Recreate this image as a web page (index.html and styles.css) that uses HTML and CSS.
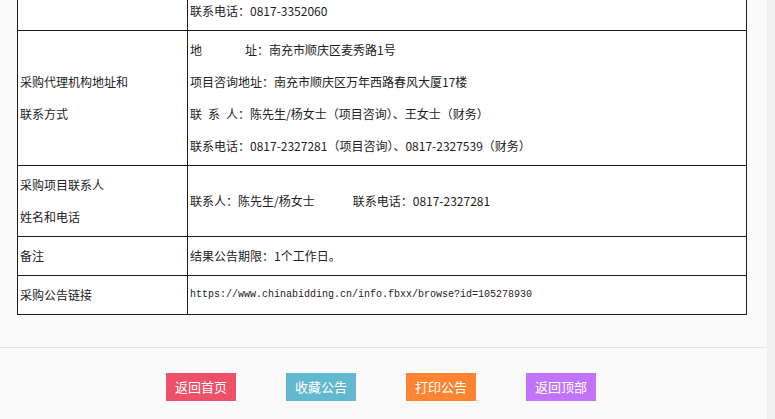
FILE: index.html
```html
<!DOCTYPE html>
<html lang="zh-CN">
<head>
<meta charset="utf-8">
<title>结果公告</title>
<link rel="stylesheet" href="styles.css">
</head>
<body>
<div class="page">
  <main class="main">
    <table class="info">
      <colgroup>
        <col class="col-label">
        <col class="col-value">
      </colgroup>
      <tbody>
        <tr>
          <td></td>
          <td><p>联系电话：0817-3352060</p></td>
        </tr>
        <tr>
          <td><p>采购代理机构地址和</p><p>联系方式</p></td>
          <td>
            <p>地<span class="gap-addr"></span>址：南充市顺庆区麦秀路1号</p>
            <p>项目咨询地址：南充市顺庆区万年西路春风大厦17楼</p>
            <p>联&ensp;系&ensp;人：陈先生/杨女士（项目咨询）、王女士（财务）</p>
            <p>联系电话：0817-2327281（项目咨询）、0817-2327539（财务）</p>
          </td>
        </tr>
        <tr>
          <td><p>采购项目联系人</p><p>姓名和电话</p></td>
          <td><p>联系人：陈先生/杨女士<span class="gap-contact"></span>联系电话：0817-2327281</p></td>
        </tr>
        <tr>
          <td><p>备注</p></td>
          <td><p>结果公告期限：1个工作日。</p></td>
        </tr>
        <tr>
          <td><p>采购公告链接</p></td>
          <td><p class="url">https://www.chinabidding.cn/info.fbxx/browse?id=105278930</p></td>
        </tr>
      </tbody>
    </table>
    <footer class="actions">
      <a class="btn btn-home">返回首页</a>
      <a class="btn btn-fav">收藏公告</a>
      <a class="btn btn-print">打印公告</a>
      <a class="btn btn-top">返回顶部</a>
    </footer>
  </main>
  <aside class="rail"></aside>
</div>
</body>
</html>
```

FILE: styles.css
```css
html, body {
  margin: 0;
  padding: 0;
  height: 100%;
  overflow: hidden;
}

body {
  font-family: "Noto Sans CJK SC", "Noto Sans", sans-serif;
  color: #222;
}

.page {
  display: flex;
  min-height: 100%;
}

.main {
  flex: 1;
  background: #fafafa;
  display: flex;
  flex-direction: column;
}

.rail {
  width: 8px;
  background: #f0f0f0;
}

.info {
  border-collapse: collapse;
  width: 730px;
  margin: -9px 0 32px 17px;
  background: #fff;
  font-size: 12px;
}

.col-label {
  width: 170px;
}

.info td {
  border: 1px solid #1c1c1c;
  padding: 3px 2px;
  vertical-align: middle;
}

.info p {
  margin: 0;
  line-height: 32px;
  white-space: nowrap;
}

.gap-addr {
  display: inline-block;
  width: 43px;
}

.gap-contact {
  display: inline-block;
  width: 38px;
}

.url {
  font-family: "Liberation Mono", monospace;
  font-size: 10px;
}

.actions {
  flex: 1;
  border-top: 1px solid #e4e4e4;
  padding: 25px 5px 0 0;
  display: flex;
  justify-content: center;
  align-items: flex-start;
  gap: 50px;
}

.btn {
  width: 70px;
  height: 28px;
  line-height: 28px;
  text-align: center;
  color: #fff;
  font-size: 13px;
  text-decoration: none;
}

.btn-home { background: #ee5067; }
.btn-fav { background: #62b8ce; }
.btn-print { background: #fe8432; }
.btn-top { background: #c174fb; }
```
